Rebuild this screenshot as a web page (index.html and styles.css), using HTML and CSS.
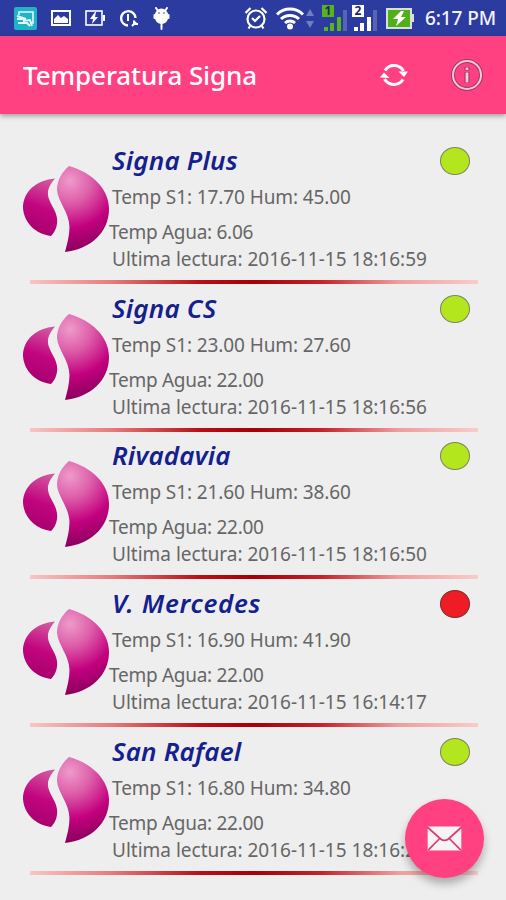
FILE: index.html
```html
<!DOCTYPE html>
<html lang="es">
<head>
    <meta charset="UTF-8">
    <meta name="viewport" content="width=device-width, initial-scale=1.0">
    <title>Temperatura Signa</title>
    <link rel="stylesheet" href="styles.css">
</head>
<body>
    <!-- Shared logo -->
    <svg class="defs" width="0" height="0" aria-hidden="true">
        <defs>
            <radialGradient id="petal" gradientUnits="userSpaceOnUse" cx="47" cy="15" r="72">
                <stop offset="0" stop-color="#ef9acb"></stop>
                <stop offset="0.3" stop-color="#dd5fa9"></stop>
                <stop offset="0.65" stop-color="#c3007e"></stop>
                <stop offset="1" stop-color="#85005b"></stop>
            </radialGradient>
            <linearGradient id="leaf" x1="0.6" y1="0" x2="0.4" y2="1">
                <stop offset="0" stop-color="#d2569f"></stop>
                <stop offset="0.5" stop-color="#c2057f"></stop>
                <stop offset="1" stop-color="#a5006c"></stop>
            </linearGradient>
            <symbol id="logo" viewBox="0 0 86 86">
                <path fill="url(#leaf)" d="M32 12.5C13 14 0 26 0 42C1 57 13 68 28 70C33 65 36 57 33 48C30 39 24 34 25 25C26 20 29 16 32 12.5Z"></path>
                <path fill="url(#petal)" d="M46 0C39 6 34 14 34 24C35 36 46 46 46.5 61C46.5 70 44 78 42 86C68 83 86 66 86 43C86 22 68 6 46 0Z"></path>
            </symbol>
        </defs>
    </svg>

    <!-- Status bar -->
    <div class="status-bar">
        <div class="status-left">
            <svg width="23" height="23" viewBox="0 0 23 23">
                <rect width="23" height="23" rx="2" fill="#20b2c5"></rect>
                <path d="M5 8V5h14v11h-3" fill="none" stroke="#e4f8fa" stroke-width="1.6"></path>
                <path d="M3 9l9 3M3 12h8M4 16h9l3 3M9 14l7-1 2 6" fill="none" stroke="#e4f8fa" stroke-width="2"></path>
            </svg>
            <svg width="20" height="16" viewBox="0 0 20 16">
                <rect x="1" y="1" width="18" height="14" fill="none" stroke="#fff" stroke-width="2"></rect>
                <path d="M3 13V9l4-4 3 3 3-2 4 3v4z" fill="#fff"></path>
            </svg>
            <svg width="20" height="16" viewBox="0 0 20 16">
                <rect x="1" y="1" width="16" height="14" fill="none" stroke="#fff" stroke-width="1.6"></rect>
                <path d="M18 5h2v6h-2zM10 2L5 9h3l-1 5 6-7h-3l1-5z" fill="#fff"></path>
            </svg>
            <svg width="20" height="19" viewBox="0 0 20 19">
                <path d="M9 16.500A7.200 7.200 0 1 1 16.500 9" fill="none" stroke="#fff" stroke-width="2.4"></path>
                <path d="M9 5v7M13 17l4-4M15 11.500v3.500h4" fill="none" stroke="#fff" stroke-width="2"></path>
            </svg>
            <svg width="17" height="23" viewBox="0 0 17 23">
                <path d="M3 1l2 3M14 1l-2 3M8.500 15v7M1.500 8v3M15.500 8v3" stroke="#fff" stroke-width="2" stroke-linecap="round"></path>
                <path d="M2 8a6.500 6.500 0 0 1 13 0v3a6.500 6 0 0 1-13 0z" fill="#fff"></path>
                <circle cx="6" cy="6" r="0.8" fill="#2c3b9f"></circle>
                <circle cx="11" cy="6" r="0.8" fill="#2c3b9f"></circle>
            </svg>
        </div>
        <div class="status-right">
            <svg class="alarm" width="24" height="24" viewBox="0 0 24 24" fill="none" stroke="#fff" stroke-width="2.200">
                <circle cx="12" cy="13" r="8.500"></circle>
                <path d="M1.500 7l5-5M22.500 7l-5-5M4.500 22.500l2-3M19.500 22.500l-2-3M8 12l3 3 5-5"></path>
            </svg>
            <svg class="wifi" width="28" height="24" viewBox="0 0 28 24" fill="none" stroke="#fff" stroke-width="3">
                <path d="M1 8.500a18 18 0 0 1 26 0M5 13a13 13 0 0 1 18 0M9 17a7.500 7.500 0 0 1 10 0"></path>
                <circle cx="14" cy="20.500" r="3" fill="#fff" stroke="none"></circle>
            </svg>
            <svg class="data" width="8" height="19" viewBox="0 0 8 19" fill="#737dc0">
                <path d="M4 0l4 7H0zM4 19l4-7H0z"></path>
            </svg>
            <div class="signal signal-green">
                <span class="sim">1</span>
                <svg width="26" height="25" viewBox="0 0 26 25">
                    <path d="M2 21h4v4H2zM8 17h4v8H8zM15 11h4v14h-4z" fill="#55b51b"></path>
                    <path d="M21 4h4v21h-4z" fill="#5963b3"></path>
                </svg>
            </div>
            <div class="signal">
                <span class="sim">2</span>
                <svg width="26" height="25" viewBox="0 0 26 25">
                    <path d="M2 21h4v4H2zM8 17h4v8H8zM15 11h4v14h-4z" fill="#fff"></path>
                    <path d="M21 4h4v21h-4z" fill="#5963b3"></path>
                </svg>
            </div>
            <svg class="battery" width="29" height="21" viewBox="0 0 29 21">
                <path d="M25 6h3v8h-3z" fill="#ddd"></path>
                <rect x="1" y="1" width="24" height="19" fill="#4fb116" stroke="#ddd" stroke-width="2"></rect>
                <path d="M15 3L7 11h5l-2 7 10-9h-5l3-6z" fill="#fff"></path>
            </svg>
            <span class="clock">6:17 PM</span>
        </div>
    </div>

    <!-- App bar -->
    <header class="app-bar">
        <h1 class="app-title">Temperatura Signa</h1>
        <svg class="refresh" width="28" height="26" viewBox="0 0 28 26">
            <path d="M5 8.500A10.800 10.800 0 0 1 23.500 9M23 17.500A10.800 10.800 0 0 1 4.500 17" fill="none" stroke="#fff" stroke-width="3"></path>
            <path d="M18.500 9.500H28L24 15zM0 15.500L4 10.500 9.500 16z" fill="#fff"></path>
        </svg>
        <svg class="info" width="34" height="34" viewBox="0 0 34 34" fill="none">
            <circle cx="17" cy="17" r="14" stroke="#9c3a62" stroke-width="4"></circle>
            <circle cx="17" cy="17" r="14" stroke="#ffc9db" stroke-width="2"></circle>
            <path d="M17 9v3.500M17 14v11" stroke="#9c3a62" stroke-width="5"></path>
            <path d="M17 9.500v2.500M17 14.500v10" stroke="#ffc9db" stroke-width="2.800"></path>
        </svg>
    </header>

    <main class="list">
        <article class="station">
            <svg class="logo"><use href="#logo"></use></svg>
            <div class="details">
                <h2 class="name">Signa Plus</h2>
                <p class="line temp">Temp S1: 17.70 Hum: 45.00</p>
                <p class="line water">Temp Agua: 6.06</p>
                <p class="line date">Ultima lectura: 2016-11-15 18:16:59</p>
            </div>
            <span class="led"></span>
        </article>
        <article class="station">
            <svg class="logo"><use href="#logo"></use></svg>
            <div class="details">
                <h2 class="name">Signa CS</h2>
                <p class="line temp">Temp S1: 23.00 Hum: 27.60</p>
                <p class="line water">Temp Agua: 22.00</p>
                <p class="line date">Ultima lectura: 2016-11-15 18:16:56</p>
            </div>
            <span class="led"></span>
        </article>
        <article class="station">
            <svg class="logo"><use href="#logo"></use></svg>
            <div class="details">
                <h2 class="name">Rivadavia</h2>
                <p class="line temp">Temp S1: 21.60 Hum: 38.60</p>
                <p class="line water">Temp Agua: 22.00</p>
                <p class="line date">Ultima lectura: 2016-11-15 18:16:50</p>
            </div>
            <span class="led"></span>
        </article>
        <article class="station">
            <svg class="logo"><use href="#logo"></use></svg>
            <div class="details">
                <h2 class="name name-wide">V. Mercedes</h2>
                <p class="line temp">Temp S1: 16.90 Hum: 41.90</p>
                <p class="line water">Temp Agua: 22.00</p>
                <p class="line date">Ultima lectura: 2016-11-15 16:14:17</p>
            </div>
            <span class="led led-off"></span>
        </article>
        <article class="station">
            <svg class="logo"><use href="#logo"></use></svg>
            <div class="details">
                <h2 class="name">San Rafael</h2>
                <p class="line temp">Temp S1: 16.80 Hum: 34.80</p>
                <p class="line water">Temp Agua: 22.00</p>
                <p class="line date">Ultima lectura: 2016-11-15 18:16:25</p>
            </div>
            <span class="led"></span>
        </article>
    </main>

    <button class="fab" type="button" aria-label="Enviar correo">
        <svg width="35" height="25" viewBox="0 0 36 26">
            <rect x="0.500" y="0.500" width="35" height="25" fill="#f6f3f4"></rect>
            <path d="M0 1l14 12.500q4 3 8 0L36 1M1 25l12-12M35 25L23 13" fill="none" stroke="#d93c75" stroke-width="1.800"></path>
        </svg>
    </button>
</body>
</html>
```

FILE: styles.css
```css
* {
    box-sizing: border-box;
}

body {
    margin: 0;
    height: 900px;
    overflow: hidden;
    background-color: #eeeeee;
    font-family: "Noto Sans", "Open Sans", sans-serif;
}

h1,
h2,
p {
    margin: 0;
    white-space: nowrap;
}

svg {
    display: block;
    flex-shrink: 0;
}

.defs {
    position: absolute;
}

/* Status bar */
.status-bar {
    display: flex;
    justify-content: space-between;
    height: 36px;
    padding: 0 10px 0 14px;
    background-color: #2c3b9f;
}

.status-left,
.status-right {
    display: flex;
    align-items: center;
}

.status-left {
    gap: 14px;
}

.wifi {
    margin-left: 8px;
}

.data {
    margin-left: 2px;
}

.signal {
    position: relative;
    margin-left: 8px;
}

.signal + .signal {
    margin-left: 4px;
}

.sim {
    position: absolute;
    top: -1px;
    left: 0;
    width: 12px;
    height: 12px;
    background-color: #fff;
    color: #1d2760;
    font-size: 12px;
    font-weight: 700;
    line-height: 12px;
    text-align: center;
}

.signal-green .sim {
    background-color: #55b51b;
}

.battery {
    margin-left: 8px;
}

.clock {
    width: 71px;
    margin-left: 10px;
    color: #f2f2fb;
    font-size: 19px;
    font-weight: 500;
    letter-spacing: -0.1px;
    line-height: 38px;
    white-space: nowrap;
}

/* App bar */
.app-bar {
    display: flex;
    align-items: center;
    height: 78px;
    padding: 0 22px 0 23px;
    background-color: #ff4081;
    box-shadow: 0 2px 5px rgba(0, 0, 0, 0.35);
}

.app-title {
    flex: 1;
    color: #fff;
    font-size: 26px;
    font-weight: 500;
    letter-spacing: -0.1px;
}

.refresh {
    margin-right: 42px;
}

/* Station list */
.list {
    padding-top: 23px;
}

.station {
    display: flex;
    align-items: flex-start;
    height: 147.7px;
    padding: 8px 36px 0 23px;
    background: linear-gradient(90deg, #f8c5c5 0%, #e77c7c 18%, #b80f14 38%, #a50005 50%, #c42329 65%, #ef9c9c 82%, #f8cccc 100%) 30px 143px / 448px 4px no-repeat;
}

.logo {
    width: 86px;
    height: 86px;
    margin-top: 21px;
}

.details {
    flex: 1;
    min-width: 0;
    padding-left: 3px;
}

.name {
    height: 30px;
    color: #14208d;
    font-size: 26px;
    font-style: italic;
    font-weight: 600;
    letter-spacing: 0.2px;
    line-height: 30px;
}

.name-wide {
    letter-spacing: 0.7px;
}

.line {
    height: 26px;
    color: #666;
    font-size: 19px;
    line-height: 26px;
}

.temp {
    margin-top: 9px;
    letter-spacing: -0.1px;
}

.water {
    margin: 9px 0 1px -3px;
    letter-spacing: -0.28px;
}

.led {
    width: 30px;
    height: 28px;
    margin-top: 2px;
    border: 1px solid #7a8460;
    border-radius: 50%;
    background-color: #b4e61d;
}

.led-off {
    border-color: #7d2a2c;
    background-color: #ee1c24;
}

/* Mail button */
.fab {
    position: fixed;
    right: 22px;
    bottom: 22px;
    display: flex;
    align-items: center;
    justify-content: center;
    width: 79px;
    height: 79px;
    padding: 0;
    border: 0;
    border-radius: 50%;
    background-color: #ff4081;
    box-shadow: 0 6px 9px rgba(0, 0, 0, 0.28);
}
```
